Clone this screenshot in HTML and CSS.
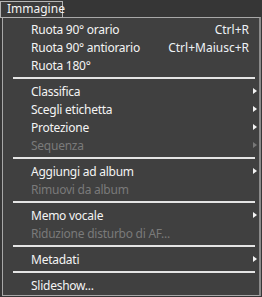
FILE: index.html
```html
<!DOCTYPE html>
<html lang="it">
<head>
    <meta charset="UTF-8">
    <title>Immagine</title>
    <link rel="stylesheet" href="styles.css">
</head>
<body>
    <div class="menubar">
        <span class="title">Immagine</span>
    </div>

    <div class="menu">
        <div class="item"><span class="label">Ruota 90° orario</span><span class="key">Ctrl+R</span></div>
        <div class="item"><span class="label">Ruota 90° antiorario</span><span class="key">Ctrl+Maiusc+R</span></div>
        <div class="item"><span class="label">Ruota 180°</span></div>
        <div class="sep"></div>
        <div class="item sub"><span class="label">Classifica</span></div>
        <div class="item sub"><span class="label">Scegli etichetta</span></div>
        <div class="item sub"><span class="label">Protezione</span></div>
        <div class="item sub disabled"><span class="label">Sequenza</span></div>
        <div class="sep"></div>
        <div class="item sub"><span class="label">Aggiungi ad album</span></div>
        <div class="item disabled"><span class="label">Rimuovi da album</span></div>
        <div class="sep"></div>
        <div class="item sub"><span class="label">Memo vocale</span></div>
        <div class="item disabled"><span class="label">Riduzione disturbo di AF...</span></div>
        <div class="sep"></div>
        <div class="item sub"><span class="label">Metadati</span></div>
        <div class="sep"></div>
        <div class="item"><span class="label">Slideshow...</span></div>
    </div>
</body>
</html>
```

FILE: styles.css
```css
body {
    margin: 0;
    padding: 0;
    background-color: #363636;
    font-family: "Noto Sans", "Open Sans", sans-serif;
    font-size: 12px;
    color: #f4f4f4;
    width: 262px;
    height: 297px;
    overflow: hidden;
}
.menubar {
    height: 17px;
}
.title {
    display: inline-block;
    box-sizing: border-box;
    width: 63px;
    height: 17px;
    line-height: 14px;
    padding-left: 6px;
    border: 1px solid #b4b4b4;
    background-color: #3c3c3c;
}
.menu {
    box-sizing: border-box;
    width: 259px;
    margin-left: 2px;
    padding: 2px 0 1px 0;
    background-color: #404040;
    border: 1px solid #a8a8a8;
    border-right: 2px solid #8a8a8a;
}
.item {
    display: flex;
    align-items: center;
    height: 18px;
    padding-left: 28px;
    padding-right: 10px;
}
.label {
    flex: 1;
    letter-spacing: -0.25px;
}
.key {
    color: #eef2f6;
}
.sub {
    position: relative;
}
.sub::after {
    content: "";
    position: absolute;
    right: 2px;
    top: 6px;
    border-left: 4px solid #f4f4f4;
    border-top: 3.5px solid transparent;
    border-bottom: 3.5px solid transparent;
}
.disabled {
    color: #7a7a7a;
}
.disabled.sub::after {
    border-left-color: #777;
}
.sep {
    height: 2px;
    margin: 3px 4px 3px 10px;
    background-color: #e4e4e4;
}
```
